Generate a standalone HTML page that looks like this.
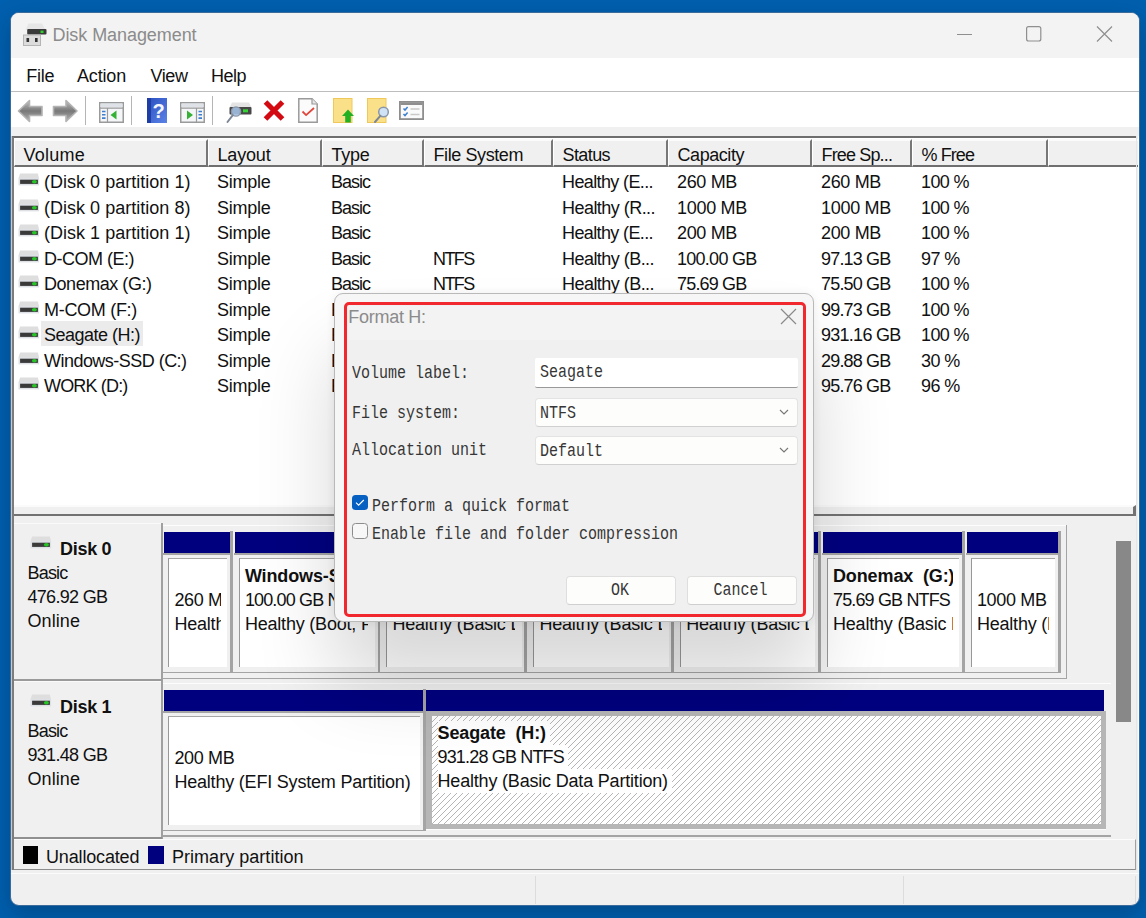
<!DOCTYPE html>
<html lang="en">
<head>
<meta charset="utf-8">
<title>Disk Management</title>
<style>
*{box-sizing:border-box;margin:0;padding:0}
html,body{width:1146px;height:918px;overflow:hidden}
body{background:#005fae;font-family:"Liberation Sans",sans-serif;font-size:18px;color:#111;position:relative}
.abs,.abs *{position:absolute}
.t{position:absolute;white-space:nowrap;line-height:24px;height:24px}
#win{position:absolute;left:10px;top:12px;width:1130px;height:894px;border:1px solid #3b6b9b;border-radius:9px;background:#f0f0f0;overflow:hidden;box-shadow:0 9px 24px rgba(0,0,0,.21)}
/* everything inside #inner is positioned in page coordinates */
#inner{position:absolute;left:-11px;top:-13px;width:1146px;height:918px}
#inner div,#inner span,#inner svg{position:absolute}
#titlebar{left:11px;top:13px;width:1128px;height:45px;background:#f3f3f3}
#menubar{left:11px;top:58px;width:1128px;height:34px;background:#fff;border-bottom:1px solid #bdbdbd}
#toolbar{left:11px;top:92px;width:1128px;height:35px;background:#fff}
.sep{width:1px;background:#b5b5b5;top:96px;height:29px}
/* list */
#list{left:11px;top:136px;width:1125.3px;height:372px;background:#fff;border-top:2.8px solid #6e6e6e}
.hc{top:139px;height:28px;background:#f0f0f0;border-top:2px solid #fbfbfb;border-left:1.5px solid #fff;border-right:2px solid #777;border-bottom:2px solid #6f6f6f}
/* splitter */
#split{left:14px;top:505px;width:1122.3px;height:11px;background:#f0f0f0;border-top:2px solid #fbfbfb;border-bottom:2.5px solid #727272;border-right:3px solid #727272}
/* graphical pane */
.b{font-weight:bold}
.pi{background:#fff;border-left:1.6px solid #989898;border-top:1.3px solid #a6a6a6;overflow:hidden}
.pc{left:0;top:0;height:109px;overflow:hidden}
#hatch{left:431.5px;top:716px;width:669px;height:107.8px;background:#fff;overflow:hidden}
#sb{left:1116.4px;top:541.4px;width:14.3px;height:181px;background:#888}
#legend{left:14px;top:839px;width:1122px;height:31px;border-top:1.5px solid #fcfcfc;border-bottom:1.7px solid #8c8c8c;border-right:1.5px solid #a0a0a0;background:#f0f0f0}
#stl{left:11px;top:872.5px;width:1128px;height:1.5px;background:#fbfbfb}
.sd{top:876px;width:1px;height:28px;background:#dcdcdc}

/* dialog */
#dlg{left:334px;top:293px;width:480px;height:329px;background:#f6f6f6;border:1px solid #b9b9b9;border-radius:9px;box-shadow:0 60px 80px rgba(0,0,0,.16),0 1px 10px rgba(0,0,0,.07)}
#red{left:344px;top:302px;width:462px;height:315px;border:3.5px solid #f1282d;border-radius:5px;background:#f0f0f0;overflow:hidden}
.m{font-family:"Liberation Mono",monospace;font-size:15px;color:#363636;transform:scaleY(1.2);transform-origin:0 50%}
.inp{background:#fff;border-radius:2px}
.cmb{background:#fdfdfb;border:1px solid #e3e3e3;border-bottom-color:#d0d0d0;border-radius:4px}
.btn{background:#fdfdfc;border:1px solid #dedede;border-bottom-color:#cfcfcf;border-radius:4px;text-align:center}
</style>
</head>
<body>
<div id="win"><div id="inner">

<div id="titlebar"></div>
<!-- app icon -->
<svg style="left:23px;top:23px" width="24" height="24" viewBox="0 0 24 24">
  <path d="M5.5 0.5h13.5l3.5 6.5H2.5z" fill="#e6e6e6"/>
  <rect x="4.2" y="6" width="19.3" height="5.6" rx="1" fill="#3a3a3a"/>
  <rect x="17.5" y="7.6" width="3" height="2.4" fill="#2fd12f"/>
  <rect x="0.5" y="12" width="17" height="10.5" fill="#dcdcdc" stroke="#b5b5b5" stroke-width="1"/>
  <rect x="3.5" y="15" width="2.6" height="4" fill="#333"/>
  <rect x="12" y="15" width="2.6" height="4" fill="#333"/>
</svg>
<span class="t" style="left:52.5px;top:23px;color:#8b8b8b;letter-spacing:-0.07px">Disk Management</span>
<!-- window controls -->
<svg style="left:950px;top:19.2px" width="180" height="30" viewBox="0 0 180 30">
  <path d="M7 15.5h15" stroke="#8f8f8f" stroke-width="1.2" fill="none"/>
  <rect x="76.6" y="7.6" width="14.2" height="14.4" rx="2" fill="none" stroke="#8f8f8f" stroke-width="1.2"/>
  <path d="M147 7.5l15 15M162 7.5l-15 15" stroke="#8f8f8f" stroke-width="1.2" fill="none"/>
</svg>

<div id="menubar"></div>
<span class="t" style="left:26.3px;top:64px;letter-spacing:-0.25px">File</span>
<span class="t" style="left:77px;top:64px;letter-spacing:-0.17px">Action</span>
<span class="t" style="left:150.5px;top:64px;letter-spacing:-0.42px">View</span>
<span class="t" style="left:211px;top:64px;letter-spacing:-0.5px">Help</span>

<div id="toolbar"></div>
<div class="sep" style="left:85px"></div>
<div class="sep" style="left:131px"></div>
<div class="sep" style="left:212px"></div>
<!-- back / forward arrows -->
<svg style="left:17px;top:98px" width="62" height="26" viewBox="0 0 62 26">
  <defs><linearGradient id="ga" x1="0" y1="0" x2="0" y2="1"><stop offset="0" stop-color="#c2c2c2"/><stop offset="0.5" stop-color="#787878"/><stop offset="1" stop-color="#b4b4b4"/></linearGradient></defs>
  <path d="M1.5 13L12.5 2.5V8.5H25V17.5H12.5V23.5Z" fill="url(#ga)" stroke="#b3b3b3" stroke-width="1.6" stroke-linejoin="round"/>
  <path d="M60 13L49 2.5V8.5H36.5V17.5H49V23.5Z" fill="url(#ga)" stroke="#b3b3b3" stroke-width="1.6" stroke-linejoin="round"/>
</svg>
<!-- show/hide console tree -->
<svg style="left:99px;top:102px" width="25" height="21" viewBox="0 0 25 21">
  <rect x="0.75" y="0.75" width="23.5" height="19.5" fill="#f4f6f8" stroke="#9a9a9a" stroke-width="1.5"/>
  <rect x="1.5" y="1.5" width="22" height="3.5" fill="#dfe3e8"/>
  <path d="M1 6.2h23M8.5 6.2v14" stroke="#9a9a9a" stroke-width="1.2"/>
  <path d="M3 9.5h3.5M3 12.8h3.5M3 16.1h3.5" stroke="#3c7fd0" stroke-width="1.6"/>
  <path d="M17.5 8.5v9l-6-4.5z" fill="#35b135"/>
</svg>
<!-- help -->
<svg style="left:147px;top:98px" width="20" height="25" viewBox="0 0 20 25">
  <defs><linearGradient id="gh" x1="0" y1="0" x2="1" y2="1"><stop offset="0" stop-color="#2a4fc0"/><stop offset="1" stop-color="#5b83e6"/></linearGradient></defs>
  <rect x="0" y="0" width="20" height="25" fill="url(#gh)"/>
  <rect x="0" y="0" width="4" height="25" fill="#1f3ea5"/>
  <text x="11.5" y="20" text-anchor="middle" font-family="Liberation Sans, sans-serif" font-weight="bold" font-size="20" fill="#f4f7ff" style="position:static">?</text>
</svg>
<svg style="left:180px;top:102px" width="25" height="21" viewBox="0 0 25 21">
  <rect x="0.75" y="0.75" width="23.5" height="19.5" fill="#f4f6f8" stroke="#9a9a9a" stroke-width="1.5"/>
  <rect x="1.5" y="1.5" width="22" height="3.5" fill="#dfe3e8"/>
  <path d="M1 6.2h23M16.5 6.2v14" stroke="#9a9a9a" stroke-width="1.2"/>
  <path d="M18.5 9.5h3.5M18.5 12.8h3.5M18.5 16.1h3.5" stroke="#3c7fd0" stroke-width="1.6"/>
  <path d="M7 8.5v9l6-4.5z" fill="#35b135"/>
</svg>
<!-- disk + magnifier -->
<svg style="left:226px;top:101px" width="26" height="23" viewBox="0 0 26 23">
  <path d="M6 1.5h17l2.5 5H3.5z" fill="#e4e4e4"/>
  <rect x="3.5" y="6" width="22" height="7.5" rx="1" fill="#474747"/>
  <rect x="17" y="8.3" width="5" height="3" fill="#35d435"/>
  <circle cx="10" cy="10.5" r="4.6" fill="#a8c8ec" fill-opacity=".85" stroke="#8b97a8" stroke-width="1.4"/>
  <path d="M6.8 14.2L1.5 21" stroke="#7d8796" stroke-width="2" stroke-linecap="round"/>
</svg>
<!-- red X -->
<svg style="left:262px;top:99px" width="24" height="23" viewBox="0 0 24 23">
  <path d="M3.5 3L20.5 20M20.5 3L3.5 20" stroke="#d40a12" stroke-width="5.2" stroke-linecap="butt"/>
</svg>
<!-- doc with check -->
<svg style="left:298px;top:98px" width="20" height="25" viewBox="0 0 20 25">
  <path d="M0.8 0.8H14L19.2 6V24.2H0.8Z" fill="#fbfbfb" stroke="#9a9a9a" stroke-width="1.5"/>
  <path d="M14 0.8V6H19.2" fill="#e6e6e6" stroke="#9a9a9a" stroke-width="1.2"/>
  <path d="M4.5 13.5l3.6 3.6L16 10" fill="none" stroke="#e0463c" stroke-width="1.8"/>
</svg>
<!-- yellow doc + green arrow -->
<svg style="left:333px;top:98px" width="21" height="25" viewBox="0 0 21 25">
  <rect x="0.5" y="0.5" width="18.5" height="24" fill="#fbe08a" stroke="#f0c85a" stroke-width="1"/>
  <path d="M15 11.5l6 6.5h-3.2v6.5h-5.6V18H9z" fill="#23b023"/>
</svg>
<!-- yellow doc + magnifier -->
<svg style="left:367px;top:98px" width="23" height="25" viewBox="0 0 23 25">
  <rect x="0.5" y="0.5" width="18.5" height="24" fill="#fbe08a" stroke="#f0c85a" stroke-width="1"/>
  <circle cx="16.5" cy="14" r="4.8" fill="#cfe2f6" stroke="#8b97a8" stroke-width="1.5"/>
  <path d="M13.3 17.8L8 24" stroke="#7d8796" stroke-width="2" stroke-linecap="round"/>
</svg>
<!-- checklist -->
<svg style="left:399px;top:101px" width="25" height="19" viewBox="0 0 25 19">
  <rect x="0.9" y="0.9" width="23.2" height="17.2" fill="#fafafa" stroke="#8e8e8e" stroke-width="1.8"/>
  <rect x="1.5" y="1.5" width="22" height="2.5" fill="#8e8e8e"/>
  <path d="M4.5 7.5l1.5 1.6 2.6-3M4.5 13l1.5 1.6 2.6-3" fill="none" stroke="#3c7fd0" stroke-width="1.5"/>
  <path d="M11.5 8h9M11.5 13.5h9" stroke="#c9c9c9" stroke-width="1.6"/>
</svg>

<div id="list"></div>
<div class="hc" style="left:14px;width:194px"></div><span class="t" style="left:23.5px;top:143.3px;letter-spacing:0.24px;">Volume</span>
<div class="hc" style="left:208px;width:114px"></div><span class="t" style="left:217.5px;top:143.3px;letter-spacing:-0.17px;">Layout</span>
<div class="hc" style="left:322px;width:102px"></div><span class="t" style="left:331.5px;top:143.3px;letter-spacing:-0.26px;">Type</span>
<div class="hc" style="left:424px;width:129px"></div><span class="t" style="left:433.5px;top:143.3px;letter-spacing:-0.41px;">File System</span>
<div class="hc" style="left:553px;width:115px"></div><span class="t" style="left:562.5px;top:143.3px;letter-spacing:-0.59px;">Status</span>
<div class="hc" style="left:668px;width:144px"></div><span class="t" style="left:677.5px;top:143.3px;letter-spacing:-0.44px;">Capacity</span>
<div class="hc" style="left:812px;width:100px"></div><span class="t" style="left:821.5px;top:143.3px;letter-spacing:-0.85px;">Free Sp...</span>
<div class="hc" style="left:912px;width:136px"></div><span class="t" style="left:921.5px;top:143.3px;letter-spacing:-0.92px;">% Free</span>
<div class="hc" style="left:1048px;width:92px"></div>
<svg style="left:18px;top:173.0px" width="22" height="13" viewBox="0 0 22 13"><path d="M2.1 0.6h17.8l1.2 4.6H0.5z" fill="#dedede"/><rect x="0.5" y="5" width="20.6" height="7.4" fill="#dde0e4"/><rect x="2.1" y="6.7" width="17.8" height="4.2" fill="#3a3a3a"/><ellipse cx="16.4" cy="8.8" rx="2.5" ry="1.7" fill="#27c627"/></svg><span class="t" style="left:44px;top:170.4px;letter-spacing:0.02px;">(Disk 0 partition 1)</span><span class="t" style="left:217px;top:170.4px;letter-spacing:-0.25px;">Simple</span><span class="t" style="left:331px;top:170.4px;letter-spacing:-1.00px;">Basic</span><span class="t" style="left:562px;top:170.4px;letter-spacing:-0.62px;">Healthy (E...</span><span class="t" style="left:677px;top:170.4px;letter-spacing:-0.34px;">260 MB</span><span class="t" style="left:821px;top:170.4px;letter-spacing:-0.34px;">260 MB</span><span class="t" style="left:921px;top:170.4px;letter-spacing:-0.61px;">100 %</span>
<svg style="left:18px;top:198.5px" width="22" height="13" viewBox="0 0 22 13"><path d="M2.1 0.6h17.8l1.2 4.6H0.5z" fill="#dedede"/><rect x="0.5" y="5" width="20.6" height="7.4" fill="#dde0e4"/><rect x="2.1" y="6.7" width="17.8" height="4.2" fill="#3a3a3a"/><ellipse cx="16.4" cy="8.8" rx="2.5" ry="1.7" fill="#27c627"/></svg><span class="t" style="left:44px;top:195.9px;letter-spacing:0.02px;">(Disk 0 partition 8)</span><span class="t" style="left:217px;top:195.9px;letter-spacing:-0.25px;">Simple</span><span class="t" style="left:331px;top:195.9px;letter-spacing:-1.00px;">Basic</span><span class="t" style="left:562px;top:195.9px;letter-spacing:-0.54px;">Healthy (R...</span><span class="t" style="left:677px;top:195.9px;letter-spacing:-0.29px;">1000 MB</span><span class="t" style="left:821px;top:195.9px;letter-spacing:-0.29px;">1000 MB</span><span class="t" style="left:921px;top:195.9px;letter-spacing:-0.61px;">100 %</span>
<svg style="left:18px;top:224.0px" width="22" height="13" viewBox="0 0 22 13"><path d="M2.1 0.6h17.8l1.2 4.6H0.5z" fill="#dedede"/><rect x="0.5" y="5" width="20.6" height="7.4" fill="#dde0e4"/><rect x="2.1" y="6.7" width="17.8" height="4.2" fill="#3a3a3a"/><ellipse cx="16.4" cy="8.8" rx="2.5" ry="1.7" fill="#27c627"/></svg><span class="t" style="left:44px;top:221.4px;letter-spacing:0.02px;">(Disk 1 partition 1)</span><span class="t" style="left:217px;top:221.4px;letter-spacing:-0.25px;">Simple</span><span class="t" style="left:331px;top:221.4px;letter-spacing:-1.00px;">Basic</span><span class="t" style="left:562px;top:221.4px;letter-spacing:-0.62px;">Healthy (E...</span><span class="t" style="left:677px;top:221.4px;letter-spacing:-0.34px;">200 MB</span><span class="t" style="left:821px;top:221.4px;letter-spacing:-0.34px;">200 MB</span><span class="t" style="left:921px;top:221.4px;letter-spacing:-0.61px;">100 %</span>
<svg style="left:18px;top:249.5px" width="22" height="13" viewBox="0 0 22 13"><path d="M2.1 0.6h17.8l1.2 4.6H0.5z" fill="#dedede"/><rect x="0.5" y="5" width="20.6" height="7.4" fill="#dde0e4"/><rect x="2.1" y="6.7" width="17.8" height="4.2" fill="#3a3a3a"/><ellipse cx="16.4" cy="8.8" rx="2.5" ry="1.7" fill="#27c627"/></svg><span class="t" style="left:44px;top:246.9px;letter-spacing:-0.50px;">D-COM (E:)</span><span class="t" style="left:217px;top:246.9px;letter-spacing:-0.25px;">Simple</span><span class="t" style="left:331px;top:246.9px;letter-spacing:-1.00px;">Basic</span><span class="t" style="left:433px;top:246.9px;letter-spacing:-1.62px;">NTFS</span><span class="t" style="left:562px;top:246.9px;letter-spacing:-0.54px;">Healthy (B...</span><span class="t" style="left:677px;top:246.9px;letter-spacing:-0.73px;">100.00 GB</span><span class="t" style="left:821px;top:246.9px;letter-spacing:-0.82px;">97.13 GB</span><span class="t" style="left:921px;top:246.9px;letter-spacing:-0.63px;">97 %</span>
<svg style="left:18px;top:275.0px" width="22" height="13" viewBox="0 0 22 13"><path d="M2.1 0.6h17.8l1.2 4.6H0.5z" fill="#dedede"/><rect x="0.5" y="5" width="20.6" height="7.4" fill="#dde0e4"/><rect x="2.1" y="6.7" width="17.8" height="4.2" fill="#3a3a3a"/><ellipse cx="16.4" cy="8.8" rx="2.5" ry="1.7" fill="#27c627"/></svg><span class="t" style="left:44px;top:272.4px;letter-spacing:-0.46px;">Donemax (G:)</span><span class="t" style="left:217px;top:272.4px;letter-spacing:-0.25px;">Simple</span><span class="t" style="left:331px;top:272.4px;letter-spacing:-1.00px;">Basic</span><span class="t" style="left:433px;top:272.4px;letter-spacing:-1.62px;">NTFS</span><span class="t" style="left:562px;top:272.4px;letter-spacing:-0.54px;">Healthy (B...</span><span class="t" style="left:677px;top:272.4px;letter-spacing:-0.82px;">75.69 GB</span><span class="t" style="left:821px;top:272.4px;letter-spacing:-0.82px;">75.50 GB</span><span class="t" style="left:921px;top:272.4px;letter-spacing:-0.61px;">100 %</span>
<svg style="left:18px;top:300.5px" width="22" height="13" viewBox="0 0 22 13"><path d="M2.1 0.6h17.8l1.2 4.6H0.5z" fill="#dedede"/><rect x="0.5" y="5" width="20.6" height="7.4" fill="#dde0e4"/><rect x="2.1" y="6.7" width="17.8" height="4.2" fill="#3a3a3a"/><ellipse cx="16.4" cy="8.8" rx="2.5" ry="1.7" fill="#27c627"/></svg><span class="t" style="left:44px;top:297.9px;letter-spacing:-0.30px;">M-COM (F:)</span><span class="t" style="left:217px;top:297.9px;letter-spacing:-0.25px;">Simple</span><span class="t" style="left:331px;top:297.9px;letter-spacing:-1.00px;">Basic</span><span class="t" style="left:433px;top:297.9px;letter-spacing:-1.62px;">NTFS</span><span class="t" style="left:562px;top:297.9px;letter-spacing:-0.54px;">Healthy (B...</span><span class="t" style="left:677px;top:297.9px;letter-spacing:-0.82px;">99.73 GB</span><span class="t" style="left:821px;top:297.9px;letter-spacing:-0.82px;">99.73 GB</span><span class="t" style="left:921px;top:297.9px;letter-spacing:-0.61px;">100 %</span>
<div style="left:41px;top:320.7px;width:102px;height:25.4px;background:#ebebeb"></div>
<svg style="left:18px;top:326.0px" width="22" height="13" viewBox="0 0 22 13"><path d="M2.1 0.6h17.8l1.2 4.6H0.5z" fill="#dedede"/><rect x="0.5" y="5" width="20.6" height="7.4" fill="#dde0e4"/><rect x="2.1" y="6.7" width="17.8" height="4.2" fill="#3a3a3a"/><ellipse cx="16.4" cy="8.8" rx="2.5" ry="1.7" fill="#27c627"/></svg><span class="t" style="left:44px;top:323.4px;letter-spacing:-0.50px;">Seagate (H:)</span><span class="t" style="left:217px;top:323.4px;letter-spacing:-0.25px;">Simple</span><span class="t" style="left:331px;top:323.4px;letter-spacing:-1.00px;">Basic</span><span class="t" style="left:433px;top:323.4px;letter-spacing:-1.62px;">NTFS</span><span class="t" style="left:562px;top:323.4px;letter-spacing:-0.54px;">Healthy (B...</span><span class="t" style="left:677px;top:323.4px;letter-spacing:-0.73px;">931.28 GB</span><span class="t" style="left:821px;top:323.4px;letter-spacing:-0.73px;">931.16 GB</span><span class="t" style="left:921px;top:323.4px;letter-spacing:-0.61px;">100 %</span>
<svg style="left:18px;top:351.5px" width="22" height="13" viewBox="0 0 22 13"><path d="M2.1 0.6h17.8l1.2 4.6H0.5z" fill="#dedede"/><rect x="0.5" y="5" width="20.6" height="7.4" fill="#dde0e4"/><rect x="2.1" y="6.7" width="17.8" height="4.2" fill="#3a3a3a"/><ellipse cx="16.4" cy="8.8" rx="2.5" ry="1.7" fill="#27c627"/></svg><span class="t" style="left:44px;top:348.9px;letter-spacing:-0.53px;">Windows-SSD (C:)</span><span class="t" style="left:217px;top:348.9px;letter-spacing:-0.25px;">Simple</span><span class="t" style="left:331px;top:348.9px;letter-spacing:-1.00px;">Basic</span><span class="t" style="left:433px;top:348.9px;letter-spacing:-1.62px;">NTFS</span><span class="t" style="left:562px;top:348.9px;letter-spacing:-0.54px;">Healthy (B...</span><span class="t" style="left:677px;top:348.9px;letter-spacing:-0.73px;">100.00 GB</span><span class="t" style="left:821px;top:348.9px;letter-spacing:-0.82px;">29.88 GB</span><span class="t" style="left:921px;top:348.9px;letter-spacing:-0.63px;">30 %</span>
<svg style="left:18px;top:377.0px" width="22" height="13" viewBox="0 0 22 13"><path d="M2.1 0.6h17.8l1.2 4.6H0.5z" fill="#dedede"/><rect x="0.5" y="5" width="20.6" height="7.4" fill="#dde0e4"/><rect x="2.1" y="6.7" width="17.8" height="4.2" fill="#3a3a3a"/><ellipse cx="16.4" cy="8.8" rx="2.5" ry="1.7" fill="#27c627"/></svg><span class="t" style="left:44px;top:374.4px;letter-spacing:-0.83px;">WORK (D:)</span><span class="t" style="left:217px;top:374.4px;letter-spacing:-0.25px;">Simple</span><span class="t" style="left:331px;top:374.4px;letter-spacing:-1.00px;">Basic</span><span class="t" style="left:433px;top:374.4px;letter-spacing:-1.62px;">NTFS</span><span class="t" style="left:562px;top:374.4px;letter-spacing:-0.36px;">Healthy (P...</span><span class="t" style="left:677px;top:374.4px;letter-spacing:-0.82px;">99.90 GB</span><span class="t" style="left:821px;top:374.4px;letter-spacing:-0.82px;">95.76 GB</span><span class="t" style="left:921px;top:374.4px;letter-spacing:-0.63px;">96 %</span>

<div id="split"></div>
<svg style="left:30px;top:536px" width="22" height="13" viewBox="0 0 22 13"><path d="M2.1 0.6h17.8l1.2 4.6H0.5z" fill="#dedede"/><rect x="0.5" y="5" width="20.6" height="7.4" fill="#dde0e4"/><rect x="2.1" y="6.7" width="17.8" height="4.2" fill="#3a3a3a"/><ellipse cx="16.4" cy="8.8" rx="2.5" ry="1.7" fill="#27c627"/></svg><span class="t b" style="left:60px;top:536.5px;letter-spacing:-0.29px;">Disk 0</span><span class="t" style="left:27.5px;top:560.6px;letter-spacing:-0.80px;">Basic</span><span class="t" style="left:27.5px;top:584.6px;letter-spacing:-0.70px;">476.92 GB</span><span class="t" style="left:27.5px;top:608.6px;letter-spacing:0.08px;">Online</span>
<svg style="left:30px;top:694px" width="22" height="13" viewBox="0 0 22 13"><path d="M2.1 0.6h17.8l1.2 4.6H0.5z" fill="#dedede"/><rect x="0.5" y="5" width="20.6" height="7.4" fill="#dde0e4"/><rect x="2.1" y="6.7" width="17.8" height="4.2" fill="#3a3a3a"/><ellipse cx="16.4" cy="8.8" rx="2.5" ry="1.7" fill="#27c627"/></svg><span class="t b" style="left:60px;top:694.5px;letter-spacing:-0.29px;">Disk 1</span><span class="t" style="left:27.5px;top:718.6px;letter-spacing:-0.80px;">Basic</span><span class="t" style="left:27.5px;top:742.6px;letter-spacing:-0.70px;">931.48 GB</span><span class="t" style="left:27.5px;top:766.6px;letter-spacing:0.08px;">Online</span>
<div style="left:161px;top:523px;width:1.8px;height:346px;background:#a0a0a0"></div><div style="left:14px;top:678.5px;width:148px;height:2px;background:#9a9a9a"></div><div style="left:14px;top:837px;width:148px;height:1.7px;background:#909090"></div><div style="left:14px;top:522.5px;width:147px;height:1.3px;background:#fafafa"></div><div style="left:14px;top:681px;width:147px;height:1.3px;background:#fafafa"></div>
<div style="left:163px;top:525px;width:903px;height:1.4px;background:#fdfdfd"></div><div style="left:1065.5px;top:524.7px;width:1.5px;height:154.5px;background:#a4a4a4"></div><div style="left:163px;top:672px;width:898px;height:1.3px;background:#a4a4a4"></div><div style="left:163px;top:678px;width:903px;height:1.3px;background:#a4a4a4"></div>
<div style="left:164px;top:532px;width:66px;height:21px;background:#00007f"></div><div style="left:230px;top:531px;width:2.8px;height:141px;background:#a4a4a4"></div><div style="left:163px;top:553px;width:67px;height:1.5px;background:#a4a4a4"></div><div class="pi" style="left:168.2px;top:558px;width:59.2px;height:109px"><div class="pc" style="width:51.6px"><span class="t" style="left:5.2px;top:29.0px;letter-spacing:-0.33px;">260 MB</span><span class="t" style="left:5.2px;top:53.0px;letter-spacing:-0.20px;">Healthy (EFI System Partition)</span></div></div>
<div style="left:234.5px;top:532px;width:143.1px;height:21px;background:#00007f"></div><div style="left:377.6px;top:531px;width:2.8px;height:141px;background:#a4a4a4"></div><div style="left:233.5px;top:553px;width:144.1px;height:1.5px;background:#a4a4a4"></div><div class="pi" style="left:238.7px;top:558px;width:136.3px;height:109px"><div class="pc" style="width:128.7px"><span class="t b" style="left:5.2px;top:5.0px;letter-spacing:-0.12px;">Windows-SSD&nbsp; (C:)</span><span class="t" style="left:5.2px;top:29.0px;letter-spacing:-0.85px;">100.00 GB NTFS</span><span class="t" style="left:5.2px;top:53.0px;letter-spacing:-0.20px;">Healthy (Boot, Page File, Crash Dump, Basic Data Partition)</span></div></div>
<div style="left:382px;top:532px;width:142.4px;height:21px;background:#00007f"></div><div style="left:524.4px;top:531px;width:2.8px;height:141px;background:#a4a4a4"></div><div style="left:381px;top:553px;width:143.4px;height:1.5px;background:#a4a4a4"></div><div class="pi" style="left:386.2px;top:558px;width:135.6px;height:109px"><div class="pc" style="width:128.0px"><span class="t b" style="left:5.2px;top:5.0px;letter-spacing:-0.12px;">D-COM&nbsp; (E:)</span><span class="t" style="left:5.2px;top:29.0px;letter-spacing:-0.85px;">100.00 GB NTFS</span><span class="t" style="left:5.2px;top:53.0px;letter-spacing:-0.20px;">Healthy (Basic Data Partition)</span></div></div>
<div style="left:529px;top:532px;width:142.3px;height:21px;background:#00007f"></div><div style="left:671.3px;top:531px;width:2.8px;height:141px;background:#a4a4a4"></div><div style="left:528px;top:553px;width:143.3px;height:1.5px;background:#a4a4a4"></div><div class="pi" style="left:533.2px;top:558px;width:135.5px;height:109px"><div class="pc" style="width:127.9px"><span class="t b" style="left:5.2px;top:5.0px;letter-spacing:-0.12px;">M-COM&nbsp; (F:)</span><span class="t" style="left:5.2px;top:29.0px;letter-spacing:-0.85px;">99.73 GB NTFS</span><span class="t" style="left:5.2px;top:53.0px;letter-spacing:-0.20px;">Healthy (Basic Data Partition)</span></div></div>
<div style="left:675.8px;top:532px;width:142.2px;height:21px;background:#00007f"></div><div style="left:818px;top:531px;width:2.8px;height:141px;background:#a4a4a4"></div><div style="left:674.8px;top:553px;width:143.2px;height:1.5px;background:#a4a4a4"></div><div class="pi" style="left:680.0px;top:558px;width:135.4px;height:109px"><div class="pc" style="width:127.8px"><span class="t b" style="left:5.2px;top:5.0px;letter-spacing:-0.12px;">WORK&nbsp; (D:)</span><span class="t" style="left:5.2px;top:29.0px;letter-spacing:-0.85px;">99.90 GB NTFS</span><span class="t" style="left:5.2px;top:53.0px;letter-spacing:-0.20px;">Healthy (Basic Data Partition)</span></div></div>
<div style="left:822.6px;top:532px;width:139.2px;height:21px;background:#00007f"></div><div style="left:961.8px;top:531px;width:2.8px;height:141px;background:#a4a4a4"></div><div style="left:821.6px;top:553px;width:140.2px;height:1.5px;background:#a4a4a4"></div><div class="pi" style="left:826.8000000000001px;top:558px;width:132.4px;height:109px"><div class="pc" style="width:124.8px"><span class="t b" style="left:5.2px;top:5.0px;letter-spacing:-0.12px;">Donemax&nbsp; (G:)</span><span class="t" style="left:5.2px;top:29.0px;letter-spacing:-0.85px;">75.69 GB NTFS</span><span class="t" style="left:5.2px;top:53.0px;letter-spacing:-0.20px;">Healthy (Basic Data Partition)</span></div></div>
<div style="left:966.5px;top:532px;width:91.5px;height:21px;background:#00007f"></div><div style="left:1058px;top:531px;width:2.8px;height:141px;background:#a4a4a4"></div><div style="left:965.5px;top:553px;width:92.5px;height:1.5px;background:#a4a4a4"></div><div class="pi" style="left:970.7px;top:558px;width:84.7px;height:109px"><div class="pc" style="width:77.1px"><span class="t" style="left:5.2px;top:29.0px;letter-spacing:-0.33px;">1000 MB</span><span class="t" style="left:5.2px;top:53.0px;letter-spacing:-0.20px;">Healthy (Recovery Partition)</span></div></div>
<div style="left:163px;top:682.5px;width:948px;height:1.6px;background:#fdfdfd"></div><div style="left:163px;top:830px;width:263px;height:1.3px;background:#a4a4a4"></div><div style="left:426px;top:829.3px;width:680px;height:1.2px;background:#fbfbfb"></div><div style="left:163px;top:835.4px;width:947.5px;height:1.6px;background:#a4a4a4"></div>
<div style="left:164px;top:690px;width:258.8px;height:21px;background:#00007f"></div><div style="left:422.8px;top:689px;width:2.8px;height:141px;background:#a4a4a4"></div><div style="left:163px;top:711px;width:259.8px;height:1.5px;background:#a4a4a4"></div><div class="pi" style="left:168.2px;top:716px;width:252.0px;height:109px"><div class="pc" style="width:244.4px"><span class="t" style="left:5.2px;top:29.0px;letter-spacing:-0.33px;">200 MB</span><span class="t" style="left:5.2px;top:53.0px;letter-spacing:-0.20px;">Healthy (EFI System Partition)</span></div></div>
<div style="left:426.3px;top:690px;width:678.1px;height:21px;background:#00007f"></div><div style="left:425.8px;top:711px;width:680.2px;height:118px;background:#b6b6b6"></div><div id="hatch"><svg style="left:0;top:0" width="669" height="109"><defs><pattern id="hp" width="6" height="6" patternUnits="userSpaceOnUse"><path d="M-1 7L7 -1M-1 1L1 -1M5 7L7 5" stroke="#9c9c9c" stroke-width="0.75" fill="none"/></pattern></defs><rect width="669" height="109" fill="url(#hp)"/></svg><span class="t b" style="left:6px;top:5.3px;letter-spacing:-0.12px;background:#fff;padding-right:4px;">Seagate&nbsp; (H:)</span><span class="t" style="left:6px;top:29.3px;letter-spacing:-0.83px;background:#fff;padding-right:4px;">931.28 GB NTFS</span><span class="t" style="left:6px;top:53.3px;letter-spacing:-0.19px;background:#fff;padding-right:4px;">Healthy (Basic Data Partition)</span></div>
<div id="sb"></div>
<div id="legend"></div>
<div style="left:22.5px;top:846px;width:15.5px;height:17.8px;background:#000"></div><span class="t" style="left:46px;top:844.5px;letter-spacing:-0.16px;">Unallocated</span><div style="left:148px;top:846px;width:15.8px;height:17.8px;background:#00007f"></div><span class="t" style="left:172px;top:844.5px;letter-spacing:0.03px;">Primary partition</span>
<div id="stl"></div><div class="sd" style="left:535px"></div><div class="sd" style="left:903px"></div><div class="sd" style="left:1135px"></div>
<div style="left:11px;top:136px;width:1.2px;height:734px;background:#c9c9c9"></div><div style="left:12px;top:137px;width:2px;height:733px;background:#7c7c7c"></div><div style="left:1136.3px;top:136px;width:1.2px;height:734px;background:#e6e6e6"></div><div style="left:1137.5px;top:136px;width:1.5px;height:734px;background:#fcfcfc"></div>

<div id="dlg"></div>
<div id="red"></div>
<div style="left:347.5px;top:305.5px;width:455px;height:34px;background:#f3f3f3"></div>
<span class="t" style="left:348.3px;top:305px;color:#8b8b8b;letter-spacing:-0.28px">Format H:</span>
<svg style="left:779px;top:307px" width="19" height="19" viewBox="0 0 19 19"><path d="M2 2l15 15M17 2L2 17" stroke="#8a8a8a" stroke-width="1.2" fill="none"/></svg>
<span class="t m" style="left:352px;top:362px">Volume label:</span>
<span class="t m" style="left:352px;top:402px">File system:</span>
<span class="t m" style="left:352px;top:439px">Allocation unit</span>
<div class="inp" style="left:535px;top:357.5px;width:262.5px;height:30px;border-bottom:1.3px solid #999"></div>
<span class="t m" style="left:540px;top:361px">Seagate</span>
<div class="cmb" style="left:535px;top:397.5px;width:262.5px;height:29px"></div>
<span class="t m" style="left:540px;top:402px">NTFS</span>
<svg style="left:778px;top:408px" width="12" height="8" viewBox="0 0 12 8"><path d="M2 2l4 4 4-4" stroke="#777" stroke-width="1.1" fill="none"/></svg>
<div class="cmb" style="left:535px;top:435.5px;width:262.5px;height:29px"></div>
<span class="t m" style="left:540px;top:440px">Default</span>
<svg style="left:778px;top:446px" width="12" height="8" viewBox="0 0 12 8"><path d="M2 2l4 4 4-4" stroke="#777" stroke-width="1.1" fill="none"/></svg>
<div style="left:352px;top:495px;width:15.5px;height:15px;background:#0560c2;border-radius:3.5px"></div>
<svg style="left:352px;top:495px" width="16" height="15" viewBox="0 0 16 15"><path d="M4 7.6l2.6 2.6L11.8 5" stroke="#fff" stroke-width="1.1" fill="none"/></svg>
<span class="t m" style="left:372px;top:495px">Perform a quick format</span>
<div style="left:352px;top:523px;width:15.5px;height:15.5px;background:#f7f7f7;border:1px solid #8c8c8c;border-radius:3.5px"></div>
<span class="t m" style="left:372px;top:523px">Enable file and folder compression</span>
<div class="btn" style="left:565.5px;top:575.5px;width:110px;height:29px"></div>
<span class="t m" style="left:611px;top:579px">OK</span>
<div class="btn" style="left:686.5px;top:575.5px;width:110px;height:29px"></div>
<span class="t m" style="left:713.5px;top:579px">Cancel</span>




</div></div>
</body>
</html>
